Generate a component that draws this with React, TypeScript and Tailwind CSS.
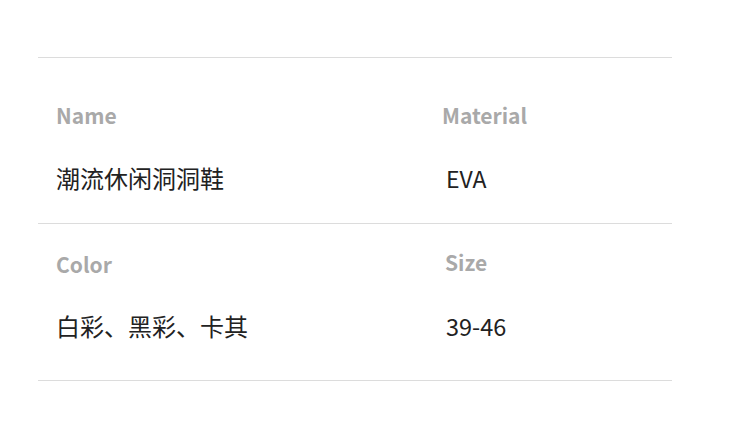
export default function App() {
  const font = { fontFamily: '"Noto Sans CJK SC", "Noto Sans", sans-serif' };
  return (
    <div className="w-[750px] h-[424px] bg-white" style={font}>
      <div className="pt-[57px] pl-[38px]">
        <div className="w-[634px] border-t border-[#dcdcdc]">
          <div className="grid grid-cols-[404px_1fr] pt-[42px] pb-[30px]">
            <div className="pl-[18px]">
              <div className="text-[21px] leading-[30px] font-bold text-[#a9a9a9]">Name</div>
              <div className="mt-[33px] text-[24px] leading-[30px] text-[#222]">潮流休闲洞洞鞋</div>
            </div>
            <div>
              <div className="text-[21px] leading-[30px] font-bold text-[#a9a9a9]">Material</div>
              <div className="mt-[33px] pl-[4px] text-[23px] leading-[30px] text-[#222]">EVA</div>
            </div>
          </div>
        </div>
        <div className="w-[634px] border-t border-[#dcdcdc]">
          <div className="grid grid-cols-[404px_1fr] pt-[25px] pb-[39px]">
            <div className="pl-[18px]">
              <div className="text-[21px] leading-[30px] font-bold text-[#a9a9a9]">Color</div>
              <div className="mt-[32px] text-[24px] leading-[30px] text-[#222]">白彩、黑彩、卡其</div>
            </div>
            <div className="pl-[3px]">
              <div className="text-[21px] leading-[30px] font-bold text-[#a9a9a9] -mt-[2px]">Size</div>
              <div className="mt-[34px] pl-[1px] text-[23.5px] leading-[30px] text-[#222]">39-46</div>
            </div>
          </div>
        </div>
        <div className="w-[634px] border-t border-[#dcdcdc]" />
      </div>
    </div>
  );
}
